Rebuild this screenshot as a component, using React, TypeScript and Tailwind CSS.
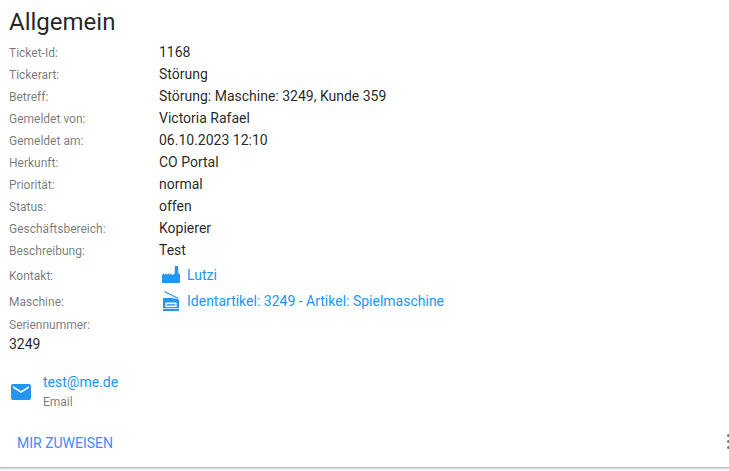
const F = "font-['Roboto',sans-serif]";

const rows: [string, string][] = [
  ["Ticket-Id:", "1168"],
  ["Tickerart:", "Störung"],
  ["Betreff:", "Störung: Maschine: 3249, Kunde 359"],
  ["Gemeldet von:", "Victoria Rafael"],
  ["Gemeldet am:", "06.10.2023 12:10"],
  ["Herkunft:", "CO Portal"],
  ["Priorität:", "normal"],
  ["Status:", "offen"],
  ["Geschäftsbereich:", "Kopierer"],
  ["Beschreibung:", "Test"],
];

function Factory() {
  return (
    <svg width="18" height="18" viewBox="0 0 18 18" fill="#2196f3" className="ml-[3px] mt-[-2px]">
      <path d="M0 18V10L2 8V10L4.5 8V10L7 8V10L9.5 8V10L12.6 9L13 1H16L16.5 9H18V18Z" />
    </svg>
  );
}

function Scanner() {
  return (
    <svg width="16" height="20" viewBox="0 0 16 20" fill="#2196f3" className="ml-[4px] mt-[-1px]">
      <path d="M1.8 0L15.4 7L15 8L1.3 1Z" />
      <path fillRule="evenodd" d="M0 7H9L16 8.4V20H0ZM2.4 11.4V16H13.6V11.4ZM0 17.2V18H16V17.2Z" />
      <path d="M3.6 12.8H12.4V14.8H3.6Z" fillOpacity="0.8" />
    </svg>
  );
}

export default function App() {
  return (
    <div className={`${F} w-[729px] h-[471px] bg-white overflow-hidden`}>
      <div className="h-[468px] border-b border-[#bdbdbd] shadow-[0_1px_2px_rgba(0,0,0,0.2)] flex flex-col">
        <h1 className="pl-[9px] pt-[8px] h-[41px] text-[24px] leading-[28px] font-normal text-[rgba(0,0,0,0.87)]">Allgemein</h1>
        <div className="pl-[9px] flex flex-col">
          {rows.map(([k, v]) => (
            <div key={k} className="flex h-[22px] items-center">
              <div className="w-[150px] pt-[2px] text-[12px] text-[rgba(0,0,0,0.54)]">{k}</div>
              <div className="text-[14px] text-[rgba(0,0,0,0.87)]">{v}</div>
            </div>
          ))}
          <div className="flex h-[26px] mt-[1px] items-center">
            <div className="w-[150px] pt-[2px] text-[12px] text-[rgba(0,0,0,0.54)]">Kontakt:</div>
            <div className="flex items-center text-[14px] text-[#2196f3]">
              <div className="w-[28px] flex"><Factory /></div>
              <span>Lutzi</span>
            </div>
          </div>
          <div className="flex h-[26px] items-center">
            <div className="w-[150px] pt-[2px] text-[12px] text-[rgba(0,0,0,0.54)]">Maschine:</div>
            <div className="flex items-center text-[14px] text-[#2196f3]">
              <div className="w-[28px] flex"><Scanner /></div>
              <span>Identartikel: 3249 - Artikel: Spielmaschine</span>
            </div>
          </div>
          <div className="text-[12px] leading-[16px] mt-[3px] text-[rgba(0,0,0,0.54)]">Seriennummer:</div>
          <div className="text-[14px] leading-[20px] mt-[1px] text-[rgba(0,0,0,0.87)]">3249</div>
        </div>
        <div className="flex items-center mt-[18px] pl-[9px]">
          <svg width="24" height="24" viewBox="0 0 24 24" fill="#2196f3" className="mt-[2px]">
            <path d="M20 4H4c-1.1 0-2 .9-2 2v12c0 1.1.9 2 2 2h16c1.1 0 2-.9 2-2V6c0-1.1-.9-2-2-2zm0 4l-8 5-8-5V6l8 5 8-5v2z" />
          </svg>
          <div className="ml-[10px]">
            <div className="text-[14px] leading-[20px] text-[#2196f3]">test@me.de</div>
            <div className="text-[12px] leading-[16px] mt-[2px] text-[rgba(0,0,0,0.54)]">Email</div>
          </div>
        </div>
        <div className="flex items-center justify-between mt-[15px] pl-[17px] h-[36px]">
          <span className="text-[14px] text-[#448aff]">MIR ZUWEISEN</span>
          <div className="flex flex-col gap-[3px] mt-[-4px] mr-[-1px] w-[3px]">
            <i className="block w-[3px] h-[3px] rounded-full bg-[#757575]" />
            <i className="block w-[3px] h-[3px] rounded-full bg-[#757575]" />
            <i className="block w-[3px] h-[3px] rounded-full bg-[#757575]" />
          </div>
        </div>
      </div>
    </div>
  );
}
